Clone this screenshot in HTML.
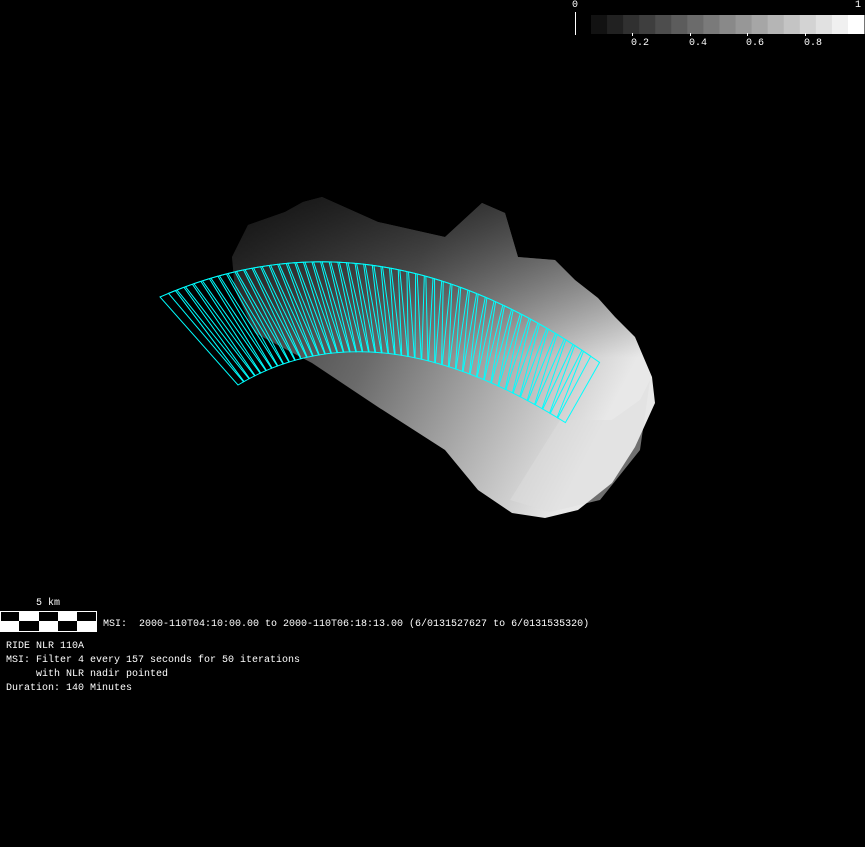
<!DOCTYPE html>
<html><head><meta charset="utf-8"><style>
html,body{margin:0;padding:0;background:#000;width:865px;height:847px;overflow:hidden}
.t{position:absolute;color:#fff;font-family:"Liberation Mono",monospace;font-size:10px;line-height:14px;white-space:pre}
</style></head><body>
<svg width="865" height="847" style="position:absolute;left:0;top:0">
<defs>
<linearGradient id="g" x1="0" y1="0" x2="1" y2="0.4">
<stop offset="0" stop-color="#2a2a2a"/><stop offset="0.45" stop-color="#6a6a6a"/><stop offset="0.75" stop-color="#b0b0b0"/><stop offset="1" stop-color="#e8e8e8"/>
</linearGradient>
<linearGradient id="g2" x1="0" y1="0" x2="0" y2="1">
<stop offset="0" stop-color="#000" stop-opacity="0.6"/><stop offset="0.5" stop-color="#000" stop-opacity="0"/>
</linearGradient>
</defs>
<polygon fill="url(#g)" points="248,225 285,212 303,202 322,197 378,222 445,237 482,203 505,213 518,257 555,260 575,280 598,298 615,317 635,337 652,377 655,403 635,447 612,483 578,510 545,518 512,513 478,490 445,450 378,407 312,363 255,333 235,290 232,257"/>
<polygon fill="url(#g2)" points="248,225 285,212 303,202 322,197 378,222 445,237 482,203 505,213 518,257 555,260 575,280 598,298 615,317 635,337 652,377 655,403 635,447 612,483 578,510 545,518 512,513 478,490 445,450 378,407 312,363 255,333 235,290 232,257"/>
<polygon fill="#ddd" opacity="0.5" points="560,420 612,420 640,400 650,380 640,450 600,500 550,512 510,500"/>
<g id="cy" stroke="#00ffff" stroke-width="1" fill="none"></g>
<!-- colorbar -->
<g id="cb"></g>
<line x1="575.5" y1="12" x2="575.5" y2="35" stroke="#fff"/>
<g stroke="#fff"><line x1="632.5" y1="33" x2="632.5" y2="36"/><line x1="690.5" y1="33" x2="690.5" y2="36"/><line x1="747.5" y1="33" x2="747.5" y2="36"/><line x1="805.5" y1="33" x2="805.5" y2="36"/></g>
<!-- scale bar -->
<rect x="0.5" y="611.5" width="96" height="20" fill="#fff" stroke="#fff"/>
<g fill="#000">
<rect x="1" y="612" width="18" height="9"/><rect x="39" y="612" width="19" height="9"/><rect x="77" y="612" width="19" height="9"/>
<rect x="19" y="621" width="20" height="10"/><rect x="58" y="621" width="19" height="10"/>
</g>
</svg>
<div class="t" style="left:572px;top:-1px">0</div>
<div class="t" style="left:855px;top:-1px">1</div>
<div class="t" style="left:631px;top:37px">0.2</div>
<div class="t" style="left:689px;top:37px">0.4</div>
<div class="t" style="left:746px;top:37px">0.6</div>
<div class="t" style="left:804px;top:37px">0.8</div>
<div class="t" style="left:36px;top:597px">5 km</div>
<div class="t" style="left:103px;top:618px">MSI:  2000-110T04:10:00.00 to 2000-110T06:18:13.00 (6/0131527627 to 6/0131535320)</div>
<div class="t" style="left:6px;top:640px">RIDE NLR 110A
MSI: Filter 4 every 157 seconds for 50 iterations
     with NLR nadir pointed
Duration: 140 Minutes</div>
<script>
var ns="http://www.w3.org/2000/svg";
var cb=document.getElementById("cb");
for(var i=0;i<17;i++){var r=document.createElementNS(ns,"rect");r.setAttribute("x",591+i*16.06);r.setAttribute("y",15);r.setAttribute("width",16.5);r.setAttribute("height",19);var v=Math.round(18+i*(237/16));r.setAttribute("fill","rgb("+v+","+v+","+v+")");cb.appendChild(r);}
function q(a,c,b,t){return (1-t)*(1-t)*a+2*(1-t)*t*c+t*t*b;}
function T(t){return [q(160,380,610,t),q(297,200,370,t)];}
function B(t){return [q(238,380,580,t),q(385,300,432,t)];}
var g=document.getElementById("cy");
for(var i=0;i<50;i++){var t=i/52,d=0.035;
var a=T(t),b=T(t+d),c=B(t+d*0.6),e=B(t);
var p=document.createElementNS(ns,"polygon");
p.setAttribute("points",a+" "+b+" "+c+" "+e);g.appendChild(p);}
</script>
</body></html>
